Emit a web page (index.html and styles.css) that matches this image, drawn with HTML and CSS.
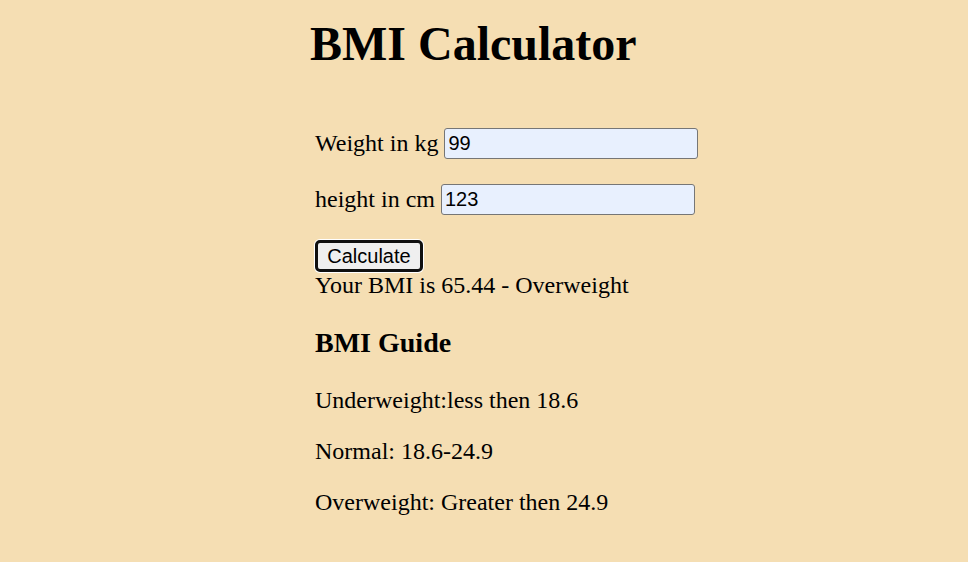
FILE: index.html
```html
<!DOCTYPE html>
<html lang="en">
<head>
<meta charset="utf-8">
<title>BMI Calculator</title>
<link rel="stylesheet" href="styles.css">
</head>
<body>
<main class="app">
  <h1 class="title">BMI Calculator</h1>
  <form class="form">
    <div class="row"><label for="w">Weight in kg</label> <input id="w" class="field" type="text" value="99"></div>
    <div class="row"><label for="h">height in cm</label> <input id="h" class="field" type="text" value="123"></div>
    <div class="actions"><button type="button" class="btn">Calculate</button></div>
    <div class="result">Your BMI is 65.44 - Overweight</div>
  </form>
  <section class="guide">
    <h3 class="guide-title">BMI Guide</h3>
    <p class="guide-item">Underweight:less then 18.6</p>
    <p class="guide-item">Normal: 18.6-24.9</p>
    <p class="guide-item">Overweight: Greater then 24.9</p>
  </section>
</main>
</body>
</html>
```

FILE: styles.css
```css
html, body {
  margin: 0;
  padding: 0;
}
body {
  background: #f5deb3;
  font-family: "Liberation Serif", "Times New Roman", serif;
  font-size: 24px;
  color: #000;
}
.app {
  padding-left: 315px;
  padding-top: 16px;
}
.title {
  font-size: 48px;
  font-weight: bold;
  margin: 0 0 0 -5px;
  line-height: 55px;
}
.form {
  margin-top: 56px;
}
.row {
  margin-bottom: 24px;
  line-height: 32px;
  height: 32px;
  display: flex;
  align-items: center;
  gap: 6px;
}
.field {
  width: 254px;
  height: 31px;
  box-sizing: border-box;
  border: 1.5px solid #767676;
  border-radius: 3px;
  background: #e8f0fe;
  font-family: "Liberation Sans", Arial, sans-serif;
  font-size: 20px;
  padding: 1px 3px;
  color: #000;
  margin: 0;
}
.actions {
  line-height: 0;
  height: 32px;
  padding-top: 1px;
  box-sizing: border-box;
}
.btn {
  width: 108px;
  height: 32px;
  box-sizing: border-box;
  border: 3px solid #101010;
  border-radius: 5px;
  box-shadow: 0 0 0 1px #fff;
  background: #efefef;
  font-family: "Liberation Sans", Arial, sans-serif;
  font-size: 20px;
  color: #000;
  padding: 0;
  margin: 0;
}
.result {
  line-height: 28px;
}
.guide-title {
  font-size: 28px;
  font-weight: bold;
  margin: 28px 0 0;
  line-height: 32px;
}
.guide-item {
  margin: 23px 0 0;
  line-height: 28px;
}
.guide-title + .guide-item {
  margin-top: 27px;
}
```
